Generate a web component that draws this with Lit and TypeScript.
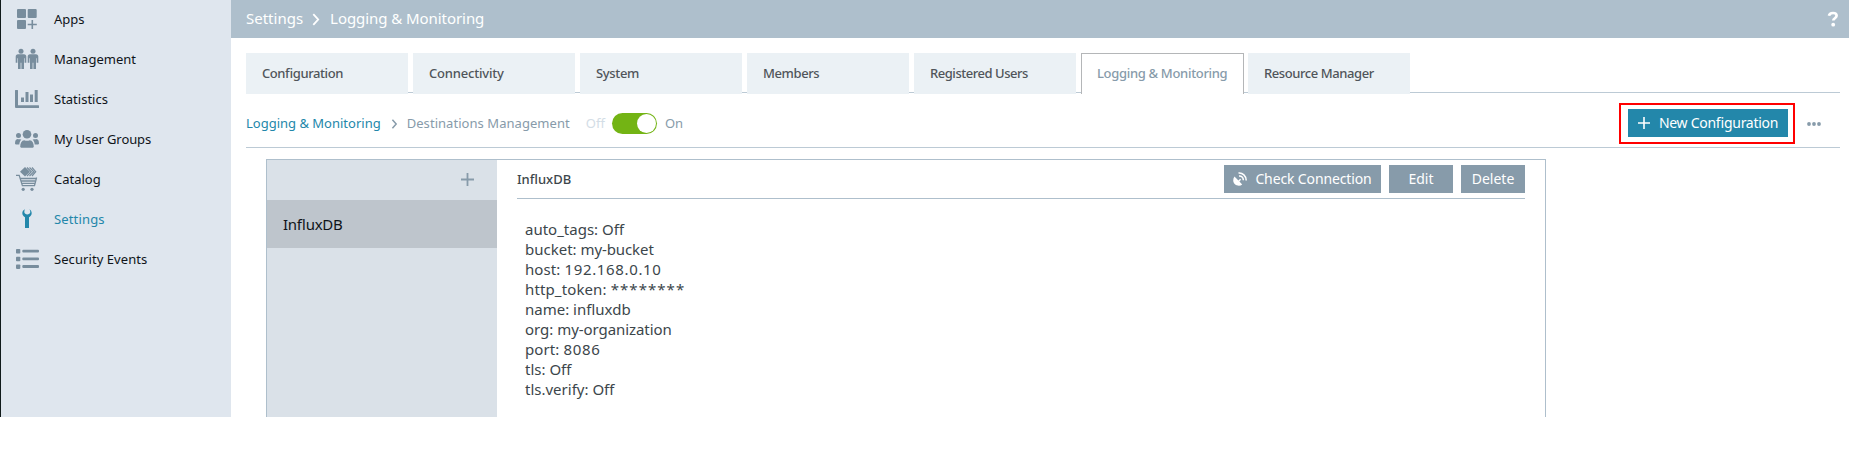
import { LitElement, html, css, svg } from "lit";
import { customElement } from "lit/decorators.js";
import { classMap } from "lit/directives/class-map.js";
import { styleMap } from "lit/directives/style-map.js";

const icons: Record<string, unknown> = {
  apps: svg`<rect x="2" y="2" width="9" height="9" rx="1"/><rect x="12.700" y="2" width="9" height="9" rx="1"/><rect x="2" y="13" width="9" height="9" rx="1"/><path d="M16.500 13h1.600v3.700h3.700v1.600h-3.700V22h-1.600v-3.700h-3.800v-1.600h3.800z"/>`,
  management: svg`<circle cx="6" cy="4.300" r="2.500"/><path d="M3 7.300h6c1.500 0 2.300 1 2.300 2.300v6.200H9.600v-4.600H9V22H6.400v-6.200h-.8V22H3V11.200h-.6v4.600H.7V9.600C.7 8.300 1.500 7.300 3 7.300z"/><circle cx="18" cy="4.300" r="2.500"/><path d="M15 7.300h6c1.500 0 2.300 1 2.300 2.300v6.200h-1.700v-4.600H21V22h-2.600v-6.200h-.8V22H15V11.200h-.6v4.600h-1.700V9.600c0-1.300.8-2.300 2.300-2.300z"/>`,
  statistics: svg`<path d="M0 3.500q0-.5.500-.5H2.500q.5 0 .5.500V18.200H23.500q.5 0 .5.500v1.800q0 .5-.5.500H1q-1 0-1-1z"/><path d="M6 10.500h3V15H6zM10.500 5h3v10h-3zM15 7.500h3V15h-3zM19.700 3h3v12h-3z"/>`,
  groups: svg`<g transform="translate(0 1)"><circle cx="12" cy="6.200" r="4.300"/><circle cx="3.500" cy="7.600" r="2.500"/><circle cx="20.500" cy="7.600" r="2.500"/><path d="M5.200 19c0-4.200 1.500-6.500 4-6.800q2.800 1 5.600 0c2.500.3 4 2.600 4 6.800l-1 .7H6.200zM0 15.700c0-3 .9-4.500 2.500-4.700q1 .4 2.700.2l1.200.6c-1.300 1-1.900 2.500-2.100 4.600H.8zM24 15.700c0-3-.9-4.500-2.500-4.700q-1 .4-2.700.2l-1.200.6c1.300 1 1.900 2.500 2.100 4.600h3.500z"/></g>`,
  catalog: svg`<path d="M10 0l5 4.700-5 4.800-5-4.800z"/><g fill="none" stroke="currentColor" stroke-width="1.200"><path d="M12 .5l4.300 4.200L12 9M14.500.5l4.300 4.200L14.500 9M17 .5l3.700 4.200L17 9"/></g><g fill="none" stroke="currentColor" stroke-width="1.300"><path d="M1 8.300h3.200L7.400 18.700H19.500L21.600 10.500M5.500 11.500H21M6.500 14h13.500M7.200 16.300h12.400"/></g><circle cx="8.200" cy="22.300" r="1.600"/><circle cx="17" cy="22.300" r="1.600"/>`,
  settings: svg`<path d="M10 2.200C8.300 3 7.300 4.400 7.300 6c0 2 1.200 3.400 2.700 4.200V21h4V10.200c1.500-.8 2.700-2.200 2.700-4.200 0-1.600-1-3-2.200-3.800.6 1 .8 1.900.8 3-.2 1.300-1.600 2.200-3 2.200s-3-1-3-2.400c0-1 .2-1.900.7-2.800z"/>`,
  events: svg`<rect x="1" y="2" width="4.300" height="4.500" rx=".8"/><rect x="1" y="9.700" width="4.300" height="4.500" rx=".8"/><rect x="1" y="17.400" width="4.300" height="4.500" rx=".8"/><rect x="7.300" y="2.800" width="16.700" height="2.800" rx="1"/><rect x="7.300" y="10.500" width="16.700" height="2.800" rx="1"/><rect x="7.300" y="18.100" width="16.700" height="2.800" rx="1"/>`,
};

const nav: [string, string, number][] = [
  ["apps", "Apps", 0], ["management", "Management", 0], ["statistics", "Statistics", 0], ["groups", "My User Groups", -0.08],
  ["catalog", "Catalog", 0], ["settings", "Settings", 0.15], ["events", "Security Events", 0.07],
];
const tabs: [string, number][] = [
  ["Configuration", -0.42], ["Connectivity", -0.2], ["System", -0.35], ["Members", -0.4],
  ["Registered Users", -0.46], ["Logging & Monitoring", -0.32], ["Resource Manager", -0.42],
];
/* key, value, tracking of the value */
const details: [string, string, number][] = [
  ["auto_tags", "Off", 0], ["bucket", "my-bucket", -0.1], ["host", "192.168.0.10", 0.65], ["http_token", "********", 1.05],
  ["name", "influxdb", 0], ["org", "my-organization", -0.07], ["port", "8086", 0.7], ["tls", "Off", 0], ["tls.verify", "Off", 0],
];

const text = (s: string, tracking = 0) =>
  html`<span style=${styleMap(tracking ? { letterSpacing: `${tracking}px` } : {})}>${s}</span>`;

const chevron = (c: string, w: number, h: number, sw: number) =>
  html`<svg class=${c} width=${w} height=${h} viewBox="0 0 7 12"><path d="M1 1l4.500 5L1 11" fill="none" stroke="currentColor" stroke-width=${sw}/></svg>`;

@customElement("app-root")
export class AppRoot extends LitElement {
  static styles = css`
    :host { display: block; height: 474px; background: #fff; overflow: hidden; font-family: "Noto Sans", sans-serif; font-size: 14px; font-feature-settings: "liga" 1; }
    * { box-sizing: border-box; }
    svg { display: block; flex: none; fill: currentColor; }
    span { white-space: pre; }
    .shell { display: flex; height: 417px; }
    .side { width: 231px; flex: none; border-left: 1px solid #101a1a; background: #dfe6ee; }
    .item { display: flex; align-items: center; height: 40px; padding: 0 0 2px 14px; gap: 15px; color: #0f1419; font-size: 13px; }
    .item svg { color: #788d9d; }
    .item.on, .item.on svg { color: #2387aa; }
    .main { flex: 1; min-width: 0; display: flex; flex-direction: column; }
    .head { height: 38px; flex: none; background: #aebfcc; color: #fff; display: flex; align-items: center; padding: 0 10px 0 15px; font-size: 15px; }
    .head > span { padding-bottom: 2px; }
    .head svg { margin: 0 10px 0 9px; }
    .head .help { margin-left: auto; margin-right: 0; }
    .tabs { margin: 15px 9px 0 15px; height: 41px; display: flex; gap: 5px; background: linear-gradient(#bccad5, #bccad5) 0 39px / 100% 1px no-repeat; }
    .tab { width: 162px; background: #ebf1f5; color: #50555a; padding-left: 16px; line-height: 41px; font-size: 13px; font-weight: 500; }
    .tab.on { width: 163px; margin-right: -1px; background: #fff; border: 1px solid #b4b6b8; border-bottom: 0; color: #879baa; padding-left: 15px; line-height: 39px; }
    .bar { margin: 0 9px 0 15px; height: 54px; border-bottom: 1px solid #bccad5; display: flex; align-items: center; color: #879baa; padding-top: 6px; font-size: 13px; }
    .bar > span, .btn > span { padding-bottom: 1px; }
    .bar .link { color: #2387aa; }
    .bar .sep { margin: 0 9px 0 10px; }
    .off { margin-left: 16px; color: #d3dde6; }
    .toggle { width: 45px; height: 21px; border-radius: 11px; background: #73b414; margin: 0 7.500px; padding: 1px 1.500px; display: flex; justify-content: flex-end; }
    .knob { width: 19px; height: 19px; border-radius: 50%; background: #fff; }
    .mark { margin-left: auto; width: 176px; height: 41px; border: 2px solid #f00; padding: 4px 0 0 7px; margin-right: 11px; }
    .btn { height: 28px; display: flex; align-items: center; justify-content: center; color: #fff; background: #879baa; font-size: 14px; font-weight: 400; }
    .new { width: 160px; background: #2387aa; gap: 9px; }
    .dots { margin-right: 18px; }
    .panel { flex: 1; margin: 11px 0 0 35px; width: 1280px; border: 1px solid #aebfcc; border-bottom: 0; display: flex; }
    .list { width: 230px; background: #dae1e8; }
    .add { height: 40px; padding: 13px 23px 0 0; display: flex; justify-content: flex-end; color: #879baa; }
    .entry { height: 48px; line-height: 48px; background: #bec5cc; color: #0f1419; padding-left: 16px; font-size: 15px; }
    .body { flex: 1; padding: 0 20px; color: #3c464b; }
    .title { height: 39px; border-bottom: 1px solid #aebfcc; display: flex; align-items: center; gap: 8px; font-size: 13px; font-weight: 500; }
    .title .name { margin-right: auto; }
    .check { width: 157px; gap: 8px; }
    .small { width: 64px; }
    .lines { padding: 20px 0 0 8px; font-size: 15px; line-height: 20px; }
  `;

  render() {
    return html`
      <div class="shell">
        <nav class="side">
          ${nav.map(([i, t, k]) => html`<div class=${classMap({ item: true, on: t === "Settings" })}><svg width="24" height="24" viewBox="0 0 24 24">${icons[i]}</svg>${text(t, k)}</div>`)}
        </nav>
        <main class="main">
          <header class="head"><span>Settings</span>${chevron("", 8, 13, 1.7)}${text("Logging & Monitoring", -0.06)}
            <svg class="help" width="12" height="16" viewBox="0 0 12 16"><path d="M2 4.800C2.300 2.800 4 2 6 2s3.600 1 3.600 2.800c0 2.400-3.300 2.500-3.300 4.700" fill="none" stroke="#fff" stroke-width="2.700"/><circle cx="6.200" cy="13.700" r="1.900"/></svg>
          </header>
          <div class="tabs">${tabs.map(([t, k], i) => html`<div class=${classMap({ tab: true, on: i === 5 })}>${text(t, k)}</div>`)}</div>
          <div class="bar">
            <span class="link">Logging &amp; Monitoring</span>${chevron("sep", 7, 10, 1.8)}${text("Destinations Management", 0.05)}
            <span class="off">Off</span><div class="toggle"><div class="knob"></div></div><span>On</span>
            <div class="mark"><div class="btn new"><svg width="12" height="12" viewBox="0 0 12 12"><path d="M5.200 0h1.600v5.200H12v1.600H6.800V12H5.200V6.800H0V5.200h5.200z"/></svg>${text("New Configuration", -0.28)}</div></div>
            <svg class="dots" width="16" height="6" viewBox="0 0 16 6"><circle cx="3" cy="3" r="1.900"/><circle cx="8" cy="3" r="1.900"/><circle cx="13" cy="3" r="1.900"/></svg>
          </div>
          <section class="panel">
            <div class="list">
              <div class="add"><svg width="13" height="13" viewBox="0 0 13 13"><path d="M5.600 0h1.800v5.600H13v1.800H7.400V13H5.600V7.400H0V5.600h5.600z"/></svg></div>
              <div class="entry">${text("InfluxDB", -0.25)}</div>
            </div>
            <div class="body">
              <div class="title"><span class="name">InfluxDB</span>
                <div class="btn check"><svg width="14" height="14" viewBox="0 0 14 14"><path d="M1.500 4.500C-.5 7 0 10.500 2 12.200c2 1.800 5.200 2 7.200.3L6.400 9.500l1.700-1.800-1-1-1.700 1.700z"/><g fill="none" stroke="#fff" stroke-width="1.500"><path d="M5.500 1C9.500.5 13.300 4 13.200 8.500M6 4c2.500-.2 4.400 1.700 4.300 4.200"/></g></svg>${text("Check Connection", -0.13)}</div>
                <div class="btn small"><span>Edit</span></div><div class="btn small"><span>Delete</span></div>
              </div>
              <div class="lines">${details.map(([k, v, t]) => html`<div>${text(`${k}: `, k === "http_token" ? 0.13 : k === "host" || k === "port" ? 0.1 : 0)}${text(v, t)}</div>`)}</div>
            </div>
          </section>
        </main>
      </div>`;
  }
}
